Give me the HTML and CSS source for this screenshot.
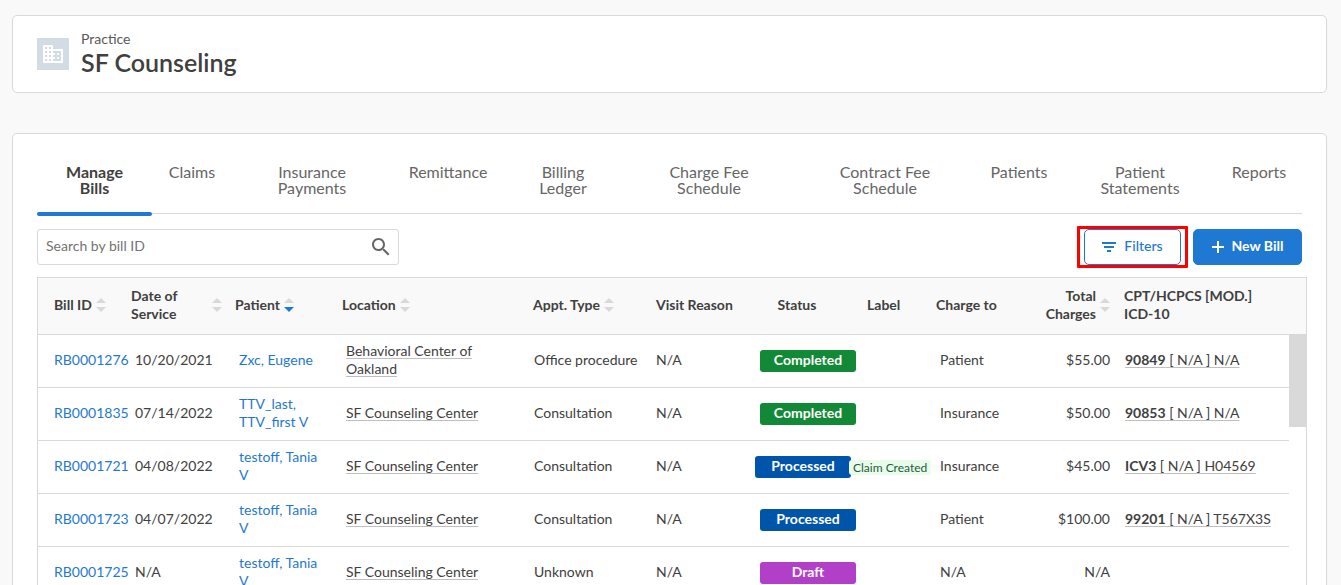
FILE: index.html
```html
<!DOCTYPE html>
<html lang="en">

<head>
    <meta charset="UTF-8">
    <meta name="viewport" content="width=device-width, initial-scale=1.0">
    <title>SF Counseling - Manage Bills</title>
    <link rel="stylesheet" href="styles.css">
</head>

<body>
    <header class="card practice">
        <div class="practice-icon">
            <svg width="24" height="24" viewBox="0 0 24 24" fill="#fff">
                <path d="M12 7V3H2v18h20V7H12zM6 19H4v-2h2v2zm0-4H4v-2h2v2zm0-4H4V9h2v2zm0-4H4V5h2v2zm4 12H8v-2h2v2zm0-4H8v-2h2v2zm0-4H8V9h2v2zm0-4H8V5h2v2zm10 12h-8v-2h2v-2h-2v-2h2v-2h-2V9h8v10zm-2-8h-2v2h2v-2zm0 4h-2v2h2v-2z" />
            </svg>
        </div>
        <div class="practice-text">
            <div class="practice-label">Practice</div>
            <h1>SF Counseling</h1>
        </div>
    </header>

    <main class="card billing">
        <nav class="tabs">
            <a href="#" class="active">Manage<br>Bills</a>
            <a href="#">Claims</a>
            <a href="#">Insurance<br>Payments</a>
            <a href="#">Remittance</a>
            <a href="#">Billing<br>Ledger</a>
            <a href="#">Charge Fee<br>Schedule</a>
            <a href="#">Contract Fee<br>Schedule</a>
            <a href="#">Patients</a>
            <a href="#">Patient<br>Statements</a>
            <a href="#">Reports</a>
        </nav>

        <div class="toolbar">
            <div class="search">
                <input type="text" placeholder="Search by bill ID" aria-label="Search by bill ID">
                <button class="search-button" aria-label="Search">
                    <svg width="24" height="24" viewBox="0 0 24 24" fill="#666">
                        <path d="M15.5 14h-.79l-.28-.27C15.41 12.59 16 11.11 16 9.5 16 5.91 13.09 3 9.5 3S3 5.91 3 9.5 5.91 16 9.5 16c1.61 0 3.09-.59 4.23-1.57l.27.28v.79l5 4.99L20.49 19l-4.99-5zm-6 0C7.01 14 5 11.99 5 9.5S7.01 5 9.5 5 14 7.01 14 9.5 11.99 14 9.5 14z" />
                    </svg>
                </button>
            </div>
            <div class="actions">
                <div class="highlight">
                    <button class="btn btn-outline">
                        <svg width="14" height="10" viewBox="0 0 14 10" fill="currentColor">
                            <path d="M0 0h14v2H0zM2 4h10v2H2zM5 8h4v2H5z" />
                        </svg>
                        <span>Filters</span>
                    </button>
                </div>
                <button class="btn btn-primary">
                    <svg width="12" height="12" viewBox="0 0 12 12" fill="currentColor">
                        <path d="M5 0h2v5h5v2H7v5H5V7H0V5h5z" />
                    </svg>
                    <span>New Bill</span>
                </button>
            </div>
        </div>

        <table class="bills">
            <colgroup>
                <col class="col-id">
                <col class="col-date">
                <col class="col-patient">
                <col class="col-location">
                <col class="col-appt">
                <col class="col-reason">
                <col class="col-status">
                <col class="col-label">
                <col class="col-charge">
                <col class="col-total">
                <col class="col-code">
                <col class="col-scroll">
            </colgroup>
            <thead>
                <tr>
                    <th><div class="sortable">Bill ID <span class="sort"></span></div></th>
                    <th><div class="sortable"><span>Date of Service</span> <span class="sort"></span></div></th>
                    <th><div class="sortable">Patient <span class="sort desc"></span></div></th>
                    <th><div class="sortable">Location <span class="sort"></span></div></th>
                    <th><div class="sortable">Appt. Type <span class="sort"></span></div></th>
                    <th>Visit Reason</th>
                    <th class="center">Status</th>
                    <th class="label">Label</th>
                    <th>Charge to</th>
                    <th class="amount"><div class="sortable"><span>Total<br>Charges</span> <span class="sort"></span></div></th>
                    <th>CPT/HCPCS [MOD.]<br>ICD-10</th>
                    <th></th>
                </tr>
            </thead>
            <tbody>
                <tr>
                    <td><a href="#">RB0001276</a></td>
                    <td>10/20/2021</td>
                    <td><a href="#">Zxc, Eugene</a></td>
                    <td><span class="hint">Behavioral Center of<br>Oakland</span></td>
                    <td>Office procedure</td>
                    <td>N/A</td>
                    <td class="status"><span class="badge completed">Completed</span></td>
                    <td></td>
                    <td>Patient</td>
                    <td class="amount">$55.00</td>
                    <td><span class="hint"><b>90849</b> [ N/A ] N/A</span></td>
                    <td class="scroll" rowspan="5"><div class="thumb"></div></td>
                </tr>
                <tr>
                    <td><a href="#">RB0001835</a></td>
                    <td>07/14/2022</td>
                    <td><a href="#">TTV_last,<br>TTV_first V</a></td>
                    <td><span class="hint">SF Counseling Center</span></td>
                    <td>Consultation</td>
                    <td>N/A</td>
                    <td class="status"><span class="badge completed">Completed</span></td>
                    <td></td>
                    <td>Insurance</td>
                    <td class="amount">$50.00</td>
                    <td><span class="hint"><b>90853</b> [ N/A ] N/A</span></td>
                </tr>
                <tr class="labelled">
                    <td><a href="#">RB0001721</a></td>
                    <td>04/08/2022</td>
                    <td><a href="#">testoff, Tania<br>V</a></td>
                    <td><span class="hint">SF Counseling Center</span></td>
                    <td>Consultation</td>
                    <td>N/A</td>
                    <td class="status"><span class="badge processed">Processed</span></td>
                    <td><span class="tag">Claim Created</span></td>
                    <td>Insurance</td>
                    <td class="amount">$45.00</td>
                    <td><span class="hint"><b>ICV3</b> [ N/A ] H04569</span></td>
                </tr>
                <tr>
                    <td><a href="#">RB0001723</a></td>
                    <td>04/07/2022</td>
                    <td><a href="#">testoff, Tania<br>V</a></td>
                    <td><span class="hint">SF Counseling Center</span></td>
                    <td>Consultation</td>
                    <td>N/A</td>
                    <td class="status"><span class="badge processed">Processed</span></td>
                    <td></td>
                    <td>Patient</td>
                    <td class="amount">$100.00</td>
                    <td><span class="hint"><b>99201</b> [ N/A ] T567X3S</span></td>
                </tr>
                <tr>
                    <td><a href="#">RB0001725</a></td>
                    <td>N/A</td>
                    <td><a href="#">testoff, Tania<br>V</a></td>
                    <td><span class="hint">SF Counseling Center</span></td>
                    <td>Unknown</td>
                    <td>N/A</td>
                    <td class="status"><span class="badge draft">Draft</span></td>
                    <td></td>
                    <td>N/A</td>
                    <td class="amount">N/A</td>
                    <td></td>
                </tr>
            </tbody>
        </table>
    </main>
</body>

</html>
```

FILE: styles.css
```css
* {
    box-sizing: border-box;
}

body {
    margin: 0;
    padding: 15px 14px 24px 12px;
    background-color: #f9f9f9;
    color: #404040;
    font-family: Lato, "Open Sans", sans-serif;
    font-size: 14px;
    line-height: 18px;
}

a {
    color: #1f78d1;
    text-decoration: none;
}

button,
input {
    font: inherit;
}

.card {
    background-color: #fff;
    border: 1px solid #d9d9d9;
    border-radius: 5px;
}

/* practice header */
.practice {
    display: flex;
    align-items: center;
    gap: 12px;
    padding: 14px 24px;
    margin-bottom: 40px;
}

.practice-icon {
    display: flex;
    align-items: center;
    justify-content: center;
    width: 32px;
    height: 32px;
    background-color: #d3dbe5;
}

.practice-text {
    padding-bottom: 2px;
}

.practice-label {
    color: #595959;
}

h1 {
    margin: 0;
    font-size: 25px;
    line-height: 28px;
    font-weight: 600;
}

/* tabs */
.billing {
    padding: 24px;
}

.tabs {
    display: grid;
    grid-template-columns: 115fr 80fr 160fr 112fr 118fr 174fr 178fr 90fr 152fr 86fr;
    border-bottom: 1px solid #d9d9d9;
    margin-bottom: 15px;
}

.tabs a {
    padding: 6px 0 17px;
    color: #666;
    font-size: 16px;
    line-height: 16px;
    text-align: center;
}

.tabs .active {
    position: relative;
    color: #404040;
    font-weight: bold;
}

.tabs .active::after {
    content: "";
    position: absolute;
    left: 0;
    right: 0;
    bottom: -3px;
    height: 4px;
    border-radius: 2px;
    background-color: #1f78d1;
}

/* toolbar */
.toolbar {
    display: flex;
    justify-content: space-between;
    margin-bottom: 12px;
}

.search {
    display: flex;
    align-items: center;
    width: 362px;
    height: 36px;
    padding: 0 5px 0 8px;
    border: 1px solid #d9d9d9;
    border-radius: 3px;
}

.search input {
    flex: 1;
    padding: 0 0 2px;
    border: none;
    outline: none;
}

.search input::placeholder {
    color: #737373;
}

.search-button {
    display: flex;
    padding: 0;
    border: none;
    background: none;
    cursor: pointer;
}

.actions {
    display: flex;
    gap: 12px;
}

.btn {
    display: flex;
    align-items: center;
    justify-content: center;
    gap: 8px;
    height: 36px;
    border: 1px solid #1f78d1;
    border-radius: 5px;
    font-weight: bold;
    cursor: pointer;
}

.btn span {
    padding-bottom: 2px;
}

.btn-outline {
    width: 97px;
    background-color: #fff;
    color: #1f78d1;
    font-weight: 500;
}

.btn-primary {
    width: 109px;
    background-color: #1f78d1;
    color: #fff;
}

.highlight {
    position: relative;
}

.highlight::after {
    content: "";
    position: absolute;
    inset: -3px -7px;
    border: 3px solid #ff0000;
    border-radius: 1px;
    pointer-events: none;
}

/* bills table */
.bills {
    width: calc(100% + 5px);
    table-layout: fixed;
    border: 1px solid #d9d9d9;
    border-spacing: 0;
}

.col-id { width: 93px; }
.col-date { width: 104px; }
.col-patient { width: 107px; }
.col-appt { width: 123px; }
.col-reason { width: 98px; }
.col-status { width: 96px; }
.col-label { width: 86px; }
.col-charge { width: 94px; }
.col-total { width: 94px; }
.col-code { width: 165px; }
.col-scroll { width: 17px; }

.bills th {
    height: 57px;
    padding: 0 0 2px;
    background-color: #f9f9f9;
    border-bottom: 1px solid #d9d9d9;
    text-align: left;
}

.bills td {
    height: 53px;
    padding: 0 0 2px 4px;
    border-bottom: 1px solid #d9d9d9;
    white-space: nowrap;
}

.bills th:first-child,
.bills td:first-child {
    padding-left: 16px;
}

.bills td:nth-child(5),
.bills td:nth-child(11) {
    padding-left: 1px;
}

.bills td:nth-child(6) {
    padding-left: 0;
}

.bills .center {
    padding-right: 10px;
    text-align: center;
}

.bills .label {
    padding-left: 17px;
}

.bills .amount {
    padding-right: 14px;
    text-align: right;
}

.sortable {
    display: flex;
    align-items: center;
    gap: 4px;
}

.bills th:nth-child(2) .sortable {
    padding-right: 13px;
}

.amount .sortable {
    justify-content: flex-end;
}

/* pair of sort arrows */
.sort {
    display: flex;
    flex-direction: column;
    gap: 4px;
    flex-shrink: 0;
}

.sort::before,
.sort::after {
    content: "";
    border: 5px solid transparent;
}

.sort::before {
    border-top: 0;
    border-bottom-color: #d9d9d9;
}

.sort::after {
    border-bottom: 0;
    border-top-color: #d9d9d9;
}

.sort.desc::after {
    border-top-color: #1f78d1;
}

.hint {
    text-decoration: underline 1px #bfbfbf;
    text-decoration-skip-ink: none;
    text-underline-offset: 2px;
}

.bills .status {
    padding: 0 0 0 6px;
}

.badge {
    display: block;
    width: 96px;
    padding-bottom: 2px;
    border-radius: 3px;
    color: #fff;
    font-weight: bold;
    line-height: 20px;
    text-align: center;
}

.completed { background-color: #128937; }
.processed { background-color: #0055ab; }
.draft { background-color: #b23fc8; }

/* the tag needs more room, so the badge moves over and they touch */
.bills .labelled .status {
    padding-left: 1px;
}

.bills .labelled td:nth-child(8) {
    padding: 0;
}

.tag {
    position: relative;
    display: inline-block;
    margin-left: -1px;
    padding: 0 4px;
    border-radius: 3px;
    background-color: #e9fbe9;
    color: #1d5c41;
    font-size: 12px;
    line-height: 15px;
}

.bills .scroll {
    padding: 0;
    border: none;
    vertical-align: top;
}

.thumb {
    height: 92px;
    background-color: #d9d9d9;
}
```
